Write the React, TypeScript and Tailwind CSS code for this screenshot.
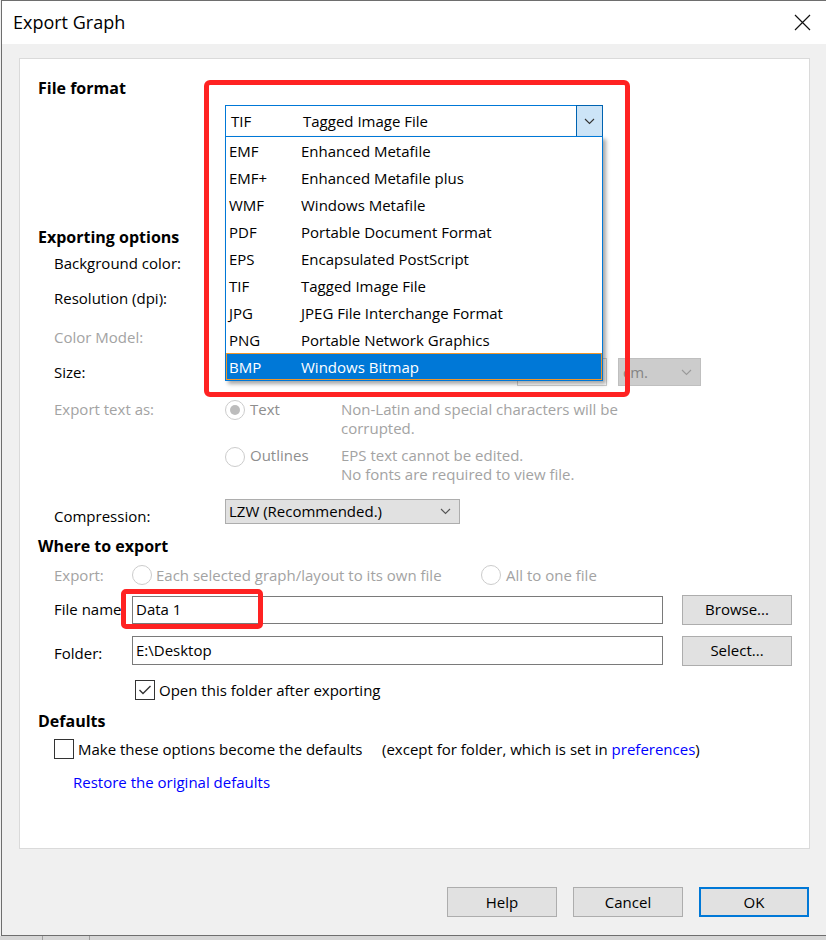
import React from 'react';

const formats: [string, string][] = [
  ['EMF', 'Enhanced Metafile'],
  ['EMF+', 'Enhanced Metafile plus'],
  ['WMF', 'Windows Metafile'],
  ['PDF', 'Portable Document Format'],
  ['EPS', 'Encapsulated PostScript'],
  ['TIF', 'Tagged Image File'],
  ['JPG', 'JPEG File Interchange Format'],
  ['PNG', 'Portable Network Graphics'],
  ['BMP', 'Windows Bitmap'],
];

function Chevron({ color = '#333' }: { color?: string }) {
  return (
    <svg width="11" height="7" viewBox="0 0 11 7" fill="none">
      <polyline points="1,1 5.5,5.5 10,1" stroke={color} strokeWidth="1.1" />
    </svg>
  );
}

function Radio({ checked, className = '' }: { checked?: boolean; className?: string }) {
  return (
    <span className={`w-[20px] h-[20px] rounded-full border border-[#cccccc] bg-white flex items-center justify-center shrink-0 ${className}`}>
      {checked && <span className="w-[10px] h-[10px] rounded-full bg-[#bcbcbc]" />}
    </span>
  );
}

function Checkbox({ checked }: { checked?: boolean }) {
  return (
    <span className="w-[20px] h-[20px] border border-[#333333] bg-white flex items-center justify-center shrink-0">
      {checked && (
        <svg width="14" height="12" viewBox="0 0 14 12" fill="none">
          <polyline points="1.5,6 5,9.5 12.5,2" stroke="#333" strokeWidth="1.4" />
        </svg>
      )}
    </span>
  );
}

function Button({ label, primary }: { label: string; primary?: boolean }) {
  return (
    <button
      className={`w-[110px] h-[30px] bg-[#e1e1e1] text-black flex items-center justify-center ${
        primary ? 'border-2 border-[#0078d7]' : 'border border-[#adadad]'
      }`}
    >
      {label}
    </button>
  );
}

export default function App() {
  return (
    <div className="w-[826px] h-[940px] bg-[#f0f0f0] font-['Segoe_UI','Open_Sans',sans-serif] text-[15px] text-black overflow-hidden">
      {/* Window */}
      <div className="ml-px h-[936px] border-l border-t border-b border-[#6e6e6e] flex flex-col">
        {/* Title bar */}
        <div className="h-[43px] bg-white flex items-center justify-between pl-[11px] pr-[15px] shrink-0">
          <span className="text-[18px] leading-none -mt-[2px]">Export Graph</span>
          <svg width="17" height="17" viewBox="0 0 17 17" fill="none">
            <path d="M1 1 L16 16 M16 1 L1 16" stroke="#111" strokeWidth="1.2" />
          </svg>
        </div>

        {/* Body */}
        <div className="flex-1 flex flex-col pl-[17px] pt-[14px]">
          <div className="w-[791px] h-[791px] bg-white border border-[#dadada] flex flex-col pl-[18px] relative">
            {/* File format */}
            <div className="mt-[18px] h-[22px] leading-[22px] font-bold text-[16px]">File format</div>
            <div className="mt-[6px] ml-[187px] w-[378px] h-[32px] relative">
              <div className="h-full border border-[#0078d7] flex items-center bg-white">
                <span className="pl-[5px] w-[77px]">TIF</span>
                <span className="flex-1">Tagged Image File</span>
                <span className="w-[27px] h-[32px] -mr-px -my-px border border-[#0063b1] bg-[#cce4f7] flex items-center justify-center">
                  <Chevron />
                </span>
              </div>
              {/* Open list */}
              <div className="absolute left-0 top-[31px] w-[378px] border border-[#0078d7] bg-white shadow-[3px_3px_4px_rgba(0,0,0,0.35)] z-20">
                {formats.map(([code, name]) => {
                  const sel = code === 'BMP';
                  return (
                    <div
                      key={code}
                      className={`h-[27px] flex items-center pl-[3px] pt-[2px] ${
                        sel ? 'bg-[#0078d7] text-white outline outline-1 -outline-offset-1 outline-[#f0962a]' : ''
                      }`}
                    >
                      <span className="w-[72px]">{code}</span>
                      <span>{name}</span>
                    </div>
                  );
                })}
              </div>
            </div>

            {/* Exporting options */}
            <div className="mt-[88px] h-[24px] flex items-center font-bold text-[16px]">Exporting options</div>
            <div className="mt-[2px] h-[24px] flex items-center pl-4">Background color:</div>
            <div className="mt-[11px] h-[24px] flex items-center pl-4">Resolution (dpi):</div>
            <div className="mt-[15px] h-[24px] flex items-center pl-4 text-[#a3a3a3]">Color Model:</div>
            <div className="mt-[9px] h-[28px] flex items-center">
              <span className="w-[187px] pl-4">Size:</span>
              <span className="ml-[292px] w-[90px] h-[28px] border border-[#cfcfcf] bg-white" />
              <span className="ml-[11px] w-[83px] h-[28px] border border-[#bfbfbf] bg-[#cccccc] flex items-center justify-between pl-[4px] pr-[8px] text-[#858585]">
                cm.
                <Chevron color="#9a9a9a" />
              </span>
            </div>

            {/* Export text as */}
            <div className="mt-[14px] flex leading-[19px] text-[#a3a3a3]">
              <span className="w-[187px] pl-4">Export text as:</span>
              <div className="flex flex-col">
                <div className="flex">
                  <div className="w-[116px] flex items-start gap-[5px] text-[#8e8e8e]">
                    <Radio checked />
                    <span>Text</span>
                  </div>
                  <div>
                    <div>Non-Latin and special characters will be</div>
                    <div>corrupted.</div>
                  </div>
                </div>
                <div className="flex mt-[8px]">
                  <div className="w-[116px] flex items-start gap-[5px] text-[#8e8e8e]">
                    <Radio className="mt-[1px]" />
                    <span>Outlines</span>
                  </div>
                  <div>
                    <div>EPS text cannot be edited.</div>
                    <div>No fonts are required to view file.</div>
                  </div>
                </div>
              </div>
            </div>

            {/* Compression */}
            <div className="mt-[15px] h-[25px] flex items-center">
              <span className="w-[187px] pl-4 pt-[9px]">Compression:</span>
              <span className="w-[235px] h-[25px] bg-[#e1e1e1] border border-[#adadad] flex items-center justify-between pl-[3px] pr-[8px]">
                LZW (Recommended.)
                <Chevron color="#555" />
              </span>
            </div>

            {/* Where to export */}
            <div className="mt-[10px] h-[24px] flex items-center font-bold text-[16px]">Where to export</div>
            <div className="mt-[5px] h-[24px] flex items-center text-[#a3a3a3]">
              <span className="w-[94px] pl-4">Export:</span>
              <Radio />
              <span className="ml-[4px] w-[325px]">Each selected graph/layout to its own file</span>
              <Radio />
              <span className="ml-[5px]">All to one file</span>
            </div>
            <div className="mt-[7px] h-[31px] flex items-center relative">
              <span className="w-[94px] pl-4">File name:</span>
              <span className="w-[531px] h-[28px] border border-[#7a7a7a] bg-white flex items-center pl-[3px]">Data 1</span>
              <span className="ml-[19px]">
                <Button label="Browse..." />
              </span>
              {/* highlight */}
              <span className="absolute left-[83px] top-[-5px] w-[142px] h-[40px] border-[5px] border-[#ff2222] rounded-[5px] pointer-events-none" />
            </div>
            <div className="mt-[10px] h-[31px] flex items-center">
              <span className="w-[94px] pl-4 pt-[6px]">Folder:</span>
              <span className="w-[531px] h-[29px] border border-[#7a7a7a] bg-white flex items-center pl-[3px]">E:\Desktop</span>
              <span className="ml-[19px]">
                <Button label="Select..." />
              </span>
            </div>
            <div className="mt-[12px] h-[24px] flex items-center pl-[97px] gap-[4px]">
              <Checkbox checked />
              <span>Open this folder after exporting</span>
            </div>

            {/* Defaults */}
            <div className="mt-[7px] h-[24px] flex items-center font-bold text-[16px]">Defaults</div>
            <div className="mt-[4px] h-[24px] flex items-center pl-4">
              <Checkbox />
              <span className="ml-[4px] w-[304px]">Make these options become the defaults</span>
              <span>
                (except for folder, which is set in <span className="text-[#0000ff]">preferences</span>)
              </span>
            </div>
            <div className="mt-[9px] h-[24px] flex items-center pl-[35px] text-[#0000ff]">Restore the original defaults</div>

            {/* red highlight around file format */}
            <span className="absolute left-[184px] top-[21px] w-[426px] h-[317px] border-[5px] border-[#ff2222] rounded-[6px] pointer-events-none z-30" />
          </div>

          {/* Bottom buttons */}
          <div className="mt-[38px] flex justify-end gap-[16px] pr-[17px]">
            <Button label="Help" />
            <Button label="Cancel" />
            <Button label="OK" primary />
          </div>
        </div>
      </div>
      {/* strip below window */}
      <div className="h-[4px] flex bg-[#d6d6d6]">
        <span className="w-[43px] border-r border-[#a0a0a0]" />
        <span className="w-[47px] border-r border-[#a0a0a0]" />
      </div>
    </div>
  );
}
